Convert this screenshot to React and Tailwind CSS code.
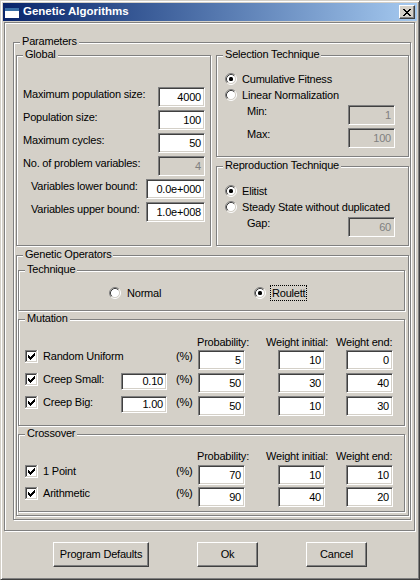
import React from 'react';

// classic win2000 dialog look
const Etched = ({ label, className = '', children }) => (
  <div className={`relative border border-[#808080] shadow-[inset_1px_1px_0_#fff,1px_1px_0_#fff] ${className}`}>
    {label && (
      <span className="absolute left-[6px] top-[-8px] bg-[#d4d0c8] px-[2px] leading-[13px] whitespace-nowrap">{label}</span>
    )}
    {children}
  </div>
);

const Edit = ({ value, w = 'w-[47px]', h = 'h-[20px]', disabled }) => (
  <div
    className={`flex items-center justify-end shrink-0 border border-t-[#808080] border-l-[#808080] border-b-white border-r-white shadow-[inset_1px_1px_0_#404040,inset_-1px_-1px_0_#d4d0c8] pr-[3px] leading-[13px] ${
      disabled ? 'bg-[#d4d0c8] text-[#808080]' : 'bg-white'
    } ${w} ${h}`}
  >
    {value}
  </div>
);

const Radio = ({ checked }) => (
  <svg width="12" height="12" viewBox="0 0 12 12" className="shrink-0">
    <circle cx="6" cy="6" r="4.5" fill="#fff" />
    <path d="M2.11 9.89A5.5 5.5 0 0 1 9.89 2.11" fill="none" stroke="#808080" />
    <path d="M9.89 2.11A5.5 5.5 0 0 1 2.11 9.89" fill="none" stroke="#fff" />
    <path d="M2.82 9.18A4.5 4.5 0 0 1 9.18 2.82" fill="none" stroke="#404040" />
    <path d="M9.18 2.82A4.5 4.5 0 0 1 2.82 9.18" fill="none" stroke="#d4d0c8" />
    {checked && <rect x="4" y="4" width="4" height="4" rx="1.5" fill="#000" />}
  </svg>
);

const checkPx = [
  [9, 3, 1], [8, 4, 2], [3, 5, 1], [7, 5, 3], [3, 6, 2], [6, 6, 3], [3, 7, 5], [4, 8, 3], [5, 9, 1],
];

const Checkbox = () => (
  <svg width="13" height="13" viewBox="0 0 13 13" className="shrink-0" shapeRendering="crispEdges">
    <rect x="0" y="0" width="13" height="13" fill="#fff" />
    <rect x="0" y="0" width="12" height="1" fill="#808080" />
    <rect x="0" y="0" width="1" height="12" fill="#808080" />
    <rect x="1" y="1" width="10" height="1" fill="#404040" />
    <rect x="1" y="1" width="1" height="10" fill="#404040" />
    <rect x="1" y="11" width="11" height="1" fill="#d4d0c8" />
    <rect x="11" y="1" width="1" height="11" fill="#d4d0c8" />
    {checkPx.map(([x, y, w], i) => (
      <rect key={i} x={x} y={y} width={w} height="1" fill="#000" />
    ))}
  </svg>
);

const closePx = [
  [0, 0, 2], [6, 0, 2], [1, 1, 2], [5, 1, 2], [2, 2, 4], [3, 3, 2], [2, 4, 4], [1, 5, 2], [5, 5, 2], [0, 6, 2], [6, 6, 2],
];

const Button = ({ children, w }) => (
  <div
    className={`flex items-center justify-center h-[25px] border border-t-white border-l-white border-r-[#404040] border-b-[#404040] shadow-[inset_-1px_-1px_0_#808080] ${w}`}
  >
    {children}
  </div>
);

const FieldRow = ({ label, value, indent = 'pl-[6px]', w, disabled }) => (
  <div className={`flex items-start justify-between h-[20px] pr-[5px] ${indent}`}>
    <span className="leading-[13px] pt-[1px] whitespace-nowrap">{label}</span>
    <Edit value={value} w={w} disabled={disabled} />
  </div>
);

const OpRow = ({ label, creep, prob, wi, we }) => (
  <div className="flex items-start h-[20px]">
    <div className="flex items-start w-[102px] pl-[6px]">
      <Checkbox />
      <span className="ml-[5px] leading-[13px] whitespace-nowrap">{label}</span>
    </div>
    <div className="w-[46px]">{creep && <Edit value={creep} w="w-[46px]" h="h-[17px]" />}</div>
    <div className="w-[9px]" />
    <div className="w-[22px] leading-[13px]">(%)</div>
    <Edit value={prob} />
    <div className="w-[33px]" />
    <Edit value={wi} />
    <div className="w-[21px]" />
    <Edit value={we} />
  </div>
);

const Headers = () => (
  <div className="flex h-[14px] leading-[13px] whitespace-nowrap">
    <div className="w-[178px]" />
    <div className="w-[69px]">Probability:</div>
    <div className="w-[70px]">Weight initial:</div>
    <div>Weight end:</div>
  </div>
);

export default function App() {
  return (
    <div className="w-[420px] h-[580px] bg-[#d4d0c8] text-black text-[11px] tracking-[-0.2px] font-['Liberation_Sans',Arial,sans-serif] border border-t-[#d4d0c8] border-l-[#d4d0c8] border-r-[#404040] border-b-[#404040] shadow-[inset_1px_1px_0_#fff,inset_-1px_-1px_0_#808080] p-[2px] flex flex-col overflow-hidden">
      {/* title bar */}
      <div className="h-[18px] shrink-0 flex items-center bg-linear-to-r from-[#0a246a] to-[#a6caf0]">
        <svg width="16" height="14" viewBox="0 0 16 14" className="ml-[1px] shrink-0" shapeRendering="crispEdges">
          <rect x="1" y="3" width="14" height="10" fill="#fff" />
          <rect x="1" y="3" width="14" height="3" fill="#3a6ea5" />
        </svg>
        <span className="ml-[3px] text-white font-bold text-[11.5px] tracking-normal">Genetic Algorithms</span>
        <div className="ml-auto mr-[2px] w-[16px] h-[14px] flex items-center justify-center bg-[#d4d0c8] border border-t-white border-l-white border-r-[#404040] border-b-[#404040] shadow-[inset_-1px_-1px_0_#808080]">
          <svg width="8" height="7" viewBox="0 0 8 7" shapeRendering="crispEdges">
            {closePx.map(([x, y, w], i) => (
              <rect key={i} x={x} y={y} width={w} height="1" fill="#000" />
            ))}
          </svg>
        </div>
      </div>

      {/* outer frame */}
      <Etched className="ml-[1px] mt-[1px] w-[411px] h-[509px] shrink-0 pl-[8px] pt-[19px]">
        <Etched label="Parameters" className="w-[398px] h-[478px]">
          <div className="flex pl-[2px] pt-[12px]">
            <Etched label="Global" className="w-[195px] h-[191px]">
              <div className="flex flex-col gap-[3px] pt-[31px]">
                <FieldRow label="Maximum population size:" value="4000" />
                <FieldRow label="Population size:" value="100" />
                <FieldRow label="Maximum cycles:" value="50" />
                <FieldRow label="No. of problem variables:" value="4" disabled />
                <FieldRow label="Variables lower bound:" value="0.0e+000" indent="pl-[14px]" w="w-[59px]" />
                <FieldRow label="Variables upper bound:" value="1.0e+008" indent="pl-[14px]" w="w-[59px]" />
              </div>
            </Etched>
            <div className="ml-[5px] flex flex-col">
              <Etched label="Selection Technique" className="w-[193px] h-[102px]">
                <div className="flex flex-col pt-[15px] pl-[8px] pr-[13px]">
                  <div className="flex items-center h-[16px]">
                    <Radio checked />
                    <span className="ml-[5px]">Cumulative Fitness</span>
                  </div>
                  <div className="flex items-center h-[16px]">
                    <Radio />
                    <span className="ml-[5px]">Linear Normalization</span>
                  </div>
                  <div className="flex items-start justify-between mt-[2px] pl-[22px]">
                    <span className="leading-[13px]">Min:</span>
                    <Edit value="1" disabled />
                  </div>
                  <div className="flex items-start justify-between mt-[3px] pl-[22px]">
                    <span className="leading-[13px]">Max:</span>
                    <Edit value="100" disabled />
                  </div>
                </div>
              </Etched>
              <Etched label="Reproduction Technique" className="w-[193px] h-[80px] mt-[9px]">
                <div className="flex flex-col pt-[16px] pl-[8px] pr-[13px]">
                  <div className="flex items-center h-[16px]">
                    <Radio checked />
                    <span className="ml-[5px]">Elitist</span>
                  </div>
                  <div className="flex items-center h-[16px]">
                    <Radio />
                    <span className="ml-[5px] whitespace-nowrap">Steady State without duplicated</span>
                  </div>
                  <div className="flex items-start justify-between mt-[2px] pl-[22px]">
                    <span className="leading-[13px]">Gap:</span>
                    <Edit value="60" disabled />
                  </div>
                </div>
              </Etched>
            </div>
          </div>

          <Etched label="Genetic Operators" className="ml-[2px] mt-[9px] w-[393px] h-[261px]">
            <div className="flex flex-col pl-[1px]">
              <Etched label="Technique" className="mt-[14px] w-[387px] h-[41px]">
                <div className="flex items-center h-[16px] mt-[14px] pl-[90px]">
                  <div className="flex items-center w-[145px]">
                    <Radio />
                    <span className="ml-[6px]">Normal</span>
                  </div>
                  <div className="flex items-center">
                    <Radio checked />
                    <span className="ml-[4px] border border-dotted border-black pl-[1px] pr-[1px] leading-[14px]">Roulett</span>
                  </div>
                </div>
              </Etched>
              <Etched label="Mutation" className="mt-[8px] w-[387px] h-[107px]">
                <div className="flex flex-col pt-[16px]">
                  <Headers />
                  <div className="flex flex-col gap-[3px]">
                    <OpRow label="Random Uniform" prob="5" wi="10" we="0" />
                    <OpRow label="Creep Small:" creep="0.10" prob="50" wi="30" we="40" />
                    <OpRow label="Creep Big:" creep="1.00" prob="50" wi="10" we="30" />
                  </div>
                </div>
              </Etched>
              <Etched label="Crossover" className="mt-[8px] w-[387px] h-[78px]">
                <div className="flex flex-col pt-[15px]">
                  <Headers />
                  <div className="flex flex-col gap-[2px] mt-[1px]">
                    <OpRow label="1 Point" prob="70" wi="10" we="10" />
                    <OpRow label="Arithmetic" prob="90" wi="40" we="20" />
                  </div>
                </div>
              </Etched>
            </div>
          </Etched>
        </Etched>
      </Etched>

      {/* buttons */}
      <div className="flex mt-[11px] pl-[50px] gap-[48px]">
        <Button w="w-[96px]">Program Defaults</Button>
        <Button w="w-[61px]">Ok</Button>
        <Button w="w-[61px]">Cancel</Button>
      </div>
    </div>
  );
}
